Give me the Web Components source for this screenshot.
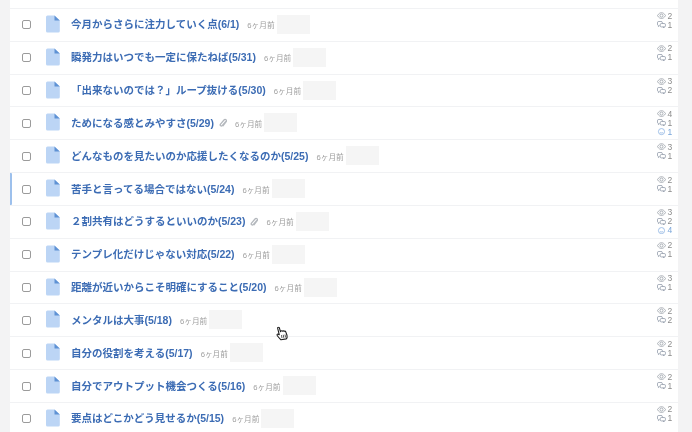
<!DOCTYPE html>
<html lang="ja">
<head>
<meta charset="utf-8">
<title>list</title>
<style>
  html, body { margin: 0; height: 100%; overflow: hidden; background: #f3f3f4; }
  body { font-family: "Liberation Sans", "Noto Sans CJK JP", sans-serif; }
</style>
</head>
<body>
<task-list>
  <task-row stats="2,1">今月からさらに注力していく点(6/1)</task-row>
  <task-row stats="2,1">瞬発力はいつでも一定に保たねば(5/31)</task-row>
  <task-row stats="3,2">「出来ないのでは？」ループ抜ける(5/30)</task-row>
  <task-row stats="4,1,1" clip>ためになる感とみやすさ(5/29)</task-row>
  <task-row stats="3,1">どんなものを見たいのか応援したくなるのか(5/25)</task-row>
  <task-row stats="2,1" active>苦手と言ってる場合ではない(5/24)</task-row>
  <task-row stats="3,2,4" clip>２割共有はどうするといいのか(5/23)</task-row>
  <task-row stats="2,1">テンプレ化だけじゃない対応(5/22)</task-row>
  <task-row stats="3,1">距離が近いからこそ明確にすること(5/20)</task-row>
  <task-row stats="2,2">メンタルは大事(5/18)</task-row>
  <task-row stats="2,1">自分の役割を考える(5/17)</task-row>
  <task-row stats="2,1">自分でアウトプット機会つくる(5/16)</task-row>
  <task-row stats="2,1">要点はどこかどう見せるか(5/15)</task-row>
</task-list>
<hand-cursor></hand-cursor>

<script>
const ICONS = {
  eye: `<svg viewBox="0 0 10 8" width="9" height="7.200" fill="none" stroke="#9aa0a8" stroke-width=".9"><path d="M.5 4C2 1.600 3.400.8 5 .8S8 1.600 9.500 4C8 6.400 6.600 7.200 5 7.200S2 6.400.5 4Z"/><circle cx="5" cy="4" r="1.700"/></svg>`,
  comment: `<svg viewBox="0 0 10 8" width="9" height="7.200" fill="none" stroke="#8f9aa8" stroke-width=".9"><path d="M6 2.600V2a1.500 1.500 0 0 0-1.500-1.500H2A1.500 1.500 0 0 0 .5 2v1.600A1.400 1.400 0 0 0 1.600 5v1.200L3 5.100"/><rect x="3.600" y="2.800" width="5.800" height="3.800" rx="1.300"/><path d="M7.800 6.600v1L6.600 6.600"/></svg>`,
  smile: `<svg viewBox="0 0 10 8" width="9" height="7.200" fill="none" stroke="#8db4e2" stroke-width=".9"><circle cx="5" cy="4" r="3.400"/><path d="M3.400 4.900c.8.8 2.400.8 3.200 0"/></svg>`,
};

class TaskList extends HTMLElement {
  constructor() {
    super();
    this.attachShadow({mode: "open"});
    this.shadowRoot.innerHTML = `
      <style>
        :host {
          display: block;
          box-sizing: border-box;
          height: 432px;
          margin: 0 14px 0 10px;
          padding-top: 8px;
          background: #fff;
          overflow: hidden;
          filter: blur(.35px);
        }
      </style>
      <slot></slot>
    `;
  }
}

class TaskRow extends HTMLElement {
  constructor() {
    super();
    this.attachShadow({mode: "open"});
  }

  connectedCallback() {
    const clip = this.hasAttribute("clip") ? `
      <svg class="clip" viewBox="0 0 8 10" width="8" height="10" fill="none" stroke="#b4b8bd" stroke-width="1.300">
        <path d="M6.800 3.400 3.200 7.600c-.9 1-2.600-.2-1.700-1.400L5 2c1.400-1.500 3.200.3 2 1.800L3.800 8.200"/>
      </svg>` : "";
    const kinds = ["eye", "comment", "smile"];
    const stats = this.getAttribute("stats").split(",").map((n, i) =>
      `<div class="stat ${kinds[i]}">${ICONS[kinds[i]]}<span>${n}</span></div>`
    ).join("");

    this.shadowRoot.innerHTML = `
      <style>
        :host {
          display: flex;
          align-items: center;
          box-sizing: border-box;
          height: 32.830px;
          padding: 0 7px 0 12px;
          border-top: 1px solid #f1f2f4;
          position: relative;
        }
        :host([active])::before {
          content: "";
          position: absolute;
          left: -1px;
          top: 0;
          bottom: 0;
          width: 2.500px;
          background: #9dc0ec;
          border-radius: 1px;
        }
        .check {
          box-sizing: border-box;
          width: 9px;
          height: 9px;
          border: 1px solid #9b9b9b;
          border-radius: 2px;
          flex: none;
          margin-right: 15px;
        }
        .file { flex: none; margin: 0 11px 2px 0; }
        .title {
          font-size: 10.500px;
          font-weight: 700;
          color: #3c6cb4;
          white-space: nowrap;
          margin-bottom: 2px;
        }
        .clip { flex: none; margin-left: 5px; }
        .date {
          font-size: 7.700px;
          color: #a0a0a0;
          margin-left: 8px;
          white-space: nowrap;
        }
        .blank {
          width: 33px;
          height: 19px;
          margin: 0 0 1px 2px;
          background: #f5f5f5;
          flex: none;
        }
        .stats {
          margin-left: auto;
          align-self: flex-start;
          padding-top: 2px;
          width: 14px;
        }
        .stat {
          display: flex;
          align-items: center;
          gap: 1.500px;
          height: 9px;
          font-size: 8.500px;
          color: #8c8c8c;
        }
        .stat svg { flex: none; }
        .stat.smile { color: #7aa6da; }
      </style>
      <div class="check"></div>
      <svg class="file" viewBox="0 0 14 18" width="14" height="18">
        <path d="M1.500 .5H8.500L13.800 5.500V16a1.500 1.500 0 0 1-1.500 1.500h-10.800A1.500 1.500 0 0 1 0 16V2A1.500 1.500 0 0 1 1.500 .5Z" fill="#bcd5f5"/>
        <path d="M8.500 .5 13.800 5.500H8.500Z" fill="#5f92d4"/>
      </svg>
      <span class="title"><slot></slot></span>
      ${clip}
      <span class="date">6ヶ月前</span>
      <div class="blank"></div>
      <div class="stats">${stats}</div>
    `;
  }
}

class HandCursor extends HTMLElement {
  constructor() {
    super();
    this.attachShadow({mode: "open"});
    this.shadowRoot.innerHTML = `
      <style>
        :host { position: absolute; left: 276px; top: 326px; width: 12px; height: 15px; display: block; transform: rotate(-10deg); }
      </style>
      <svg viewBox="0 0 12 15" width="12" height="15">
        <path d="M2.600 1.500c0-1.100 1.700-1.100 1.800 0L4.800 5.400 5.200 5c.6-.5 1.400-.3 1.600.3.600-.4 1.400-.2 1.600.4.700-.3 1.500 0 1.600.8l.6 3.600c.1 1.500-.4 2.700-1.300 3.400H3.900C3 12.200 1.800 10.400.9 8.600.5 7.800 1.400 6.900 2.200 7.500L3.100 8.300Z" fill="#fff" stroke="#1c1c1c" stroke-width="1.100" stroke-linejoin="round"/>
        <path d="M5.200 9v3M7 9v3M8.800 9v3" stroke="#1c1c1c" stroke-width=".7"/>
      </svg>
    `;
  }
}

customElements.define("task-list", TaskList);
customElements.define("task-row", TaskRow);
customElements.define("hand-cursor", HandCursor);
</script>
</body>
</html>
